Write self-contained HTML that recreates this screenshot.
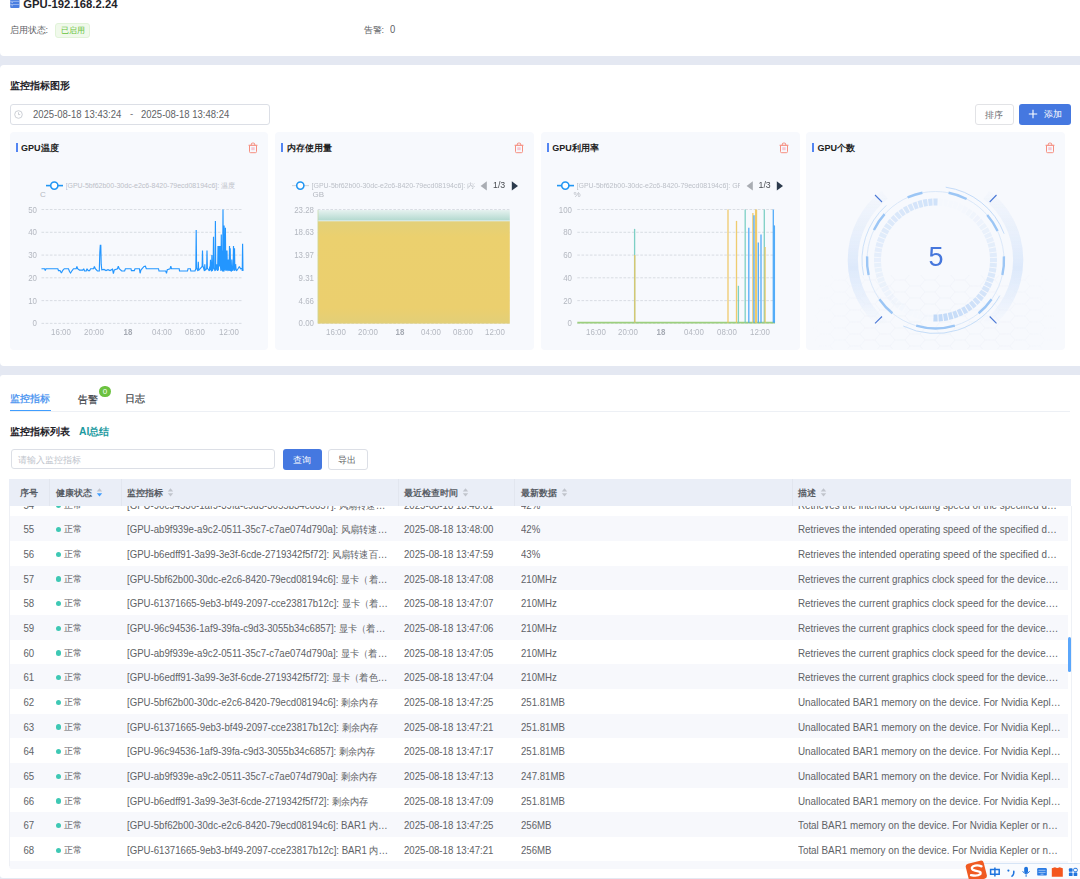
<!DOCTYPE html><html><head><meta charset="utf-8"><style>
*{box-sizing:border-box;margin:0;padding:0}
html,body{width:1080px;height:879px;overflow:hidden;background:#e4e8f2;font-family:"Liberation Sans", sans-serif;}
.a{position:absolute;white-space:nowrap}
.card{position:absolute;background:#fff;border-radius:4px}
.cc{position:absolute;background:#f7f9fd;border-radius:4px;top:132px;height:218px;width:258.8px}
.ct{position:absolute;top:141.8px;font-size:9px;font-weight:bold;color:#222;line-height:12px}
.bar{position:absolute;top:143px;width:2px;height:9px;background:#5385f2}
.ax{position:absolute;font-size:8px;color:#b4b8c0;line-height:10px;white-space:nowrap}
.leg{position:absolute;font-size:7px;color:#bcc0c8;line-height:9px;white-space:nowrap;overflow:hidden}
.row{position:absolute;left:9.3px;width:1059px;height:24.67px}
.td{position:absolute;font-size:9.7px;color:#606266;line-height:12px;white-space:nowrap}
.tx{font-size:10.5px;transform:scaleX(0.917);transform-origin:0 50%}
.th{position:absolute;font-size:8.8px;color:#565b63;line-height:12px;white-space:nowrap;font-weight:bold}
</style></head><body><div class="card" style="left:0;top:-20px;width:1090px;height:76px"></div>
<svg class="a" style="left:10px;top:0px" width="10" height="9" viewBox="0 0 10 9"><rect x="0.2" y="-3" width="9.3" height="10.9" rx="1" fill="#4a7ee0"/><rect x="0.2" y="0.9" width="9.3" height="0.7" fill="#b3c8f3"/><rect x="0.2" y="4.0" width="9.3" height="0.7" fill="#b3c8f3"/><rect x="1.6" y="2.1" width="1.1" height="0.9" fill="#c5d5f5"/><rect x="1.6" y="5.3" width="1.1" height="0.9" fill="#c5d5f5"/></svg>
<div class="a" style="left:23.3px;top:-2.6px;font-size:11.3px;font-weight:bold;color:#1f2329;line-height:14px">GPU-192.168.2.24</div>
<div class="a" style="left:9.6px;top:23.5px;font-size:9px;color:#606266;line-height:12px">启用状态:</div>
<div class="a" style="left:55px;top:23px;width:35px;height:15px;background:#f0f9eb;border:1px solid #e1f3d8;border-radius:3px"></div>
<div class="a" style="left:61.4px;top:25px;font-size:7.6px;color:#67c23a;line-height:12px">已启用</div>
<div class="a" style="left:363.5px;top:23.5px;font-size:9px;color:#606266;line-height:12px">告警:</div>
<div class="a" style="left:390px;top:23.3px;font-size:10.5px;color:#606266;line-height:12px;transform:scaleX(0.9);transform-origin:0 50%">0</div>
<div class="card" style="left:0;top:65px;width:1090px;height:301px"></div>
<div class="a" style="left:10px;top:79.3px;font-size:10px;font-weight:bold;color:#1f2329;line-height:13px">监控指标图形</div>
<div class="a" style="left:10px;top:104px;width:260px;height:20.5px;border:1px solid #dcdfe6;border-radius:3px;background:#fff"></div>
<svg class="a" style="left:13.5px;top:109.5px" width="9" height="9" viewBox="0 0 9 9"><circle cx="4.5" cy="4.5" r="3.8" fill="none" stroke="#c0c4cc" stroke-width="0.8"/><path d="M4.5 2.3V4.6H6.2" fill="none" stroke="#c0c4cc" stroke-width="0.8"/></svg>
<div class="a" style="left:33px;top:108.3px;font-size:10.5px;color:#606266;line-height:12px;transform:scaleX(0.905);transform-origin:0 50%">2025-08-18 13:43:24</div>
<div class="a" style="left:130px;top:108px;font-size:9.6px;color:#606266;line-height:12px">-</div>
<div class="a" style="left:140.8px;top:108.3px;font-size:10.5px;color:#606266;line-height:12px;transform:scaleX(0.905);transform-origin:0 50%">2025-08-18 13:48:24</div>
<div class="a" style="left:975px;top:104px;width:38.5px;height:20.5px;border:1px solid #e2e3e6;border-radius:3px;background:#fff"></div>
<div class="a" style="left:985px;top:108.5px;font-size:9px;color:#6b6e73;line-height:12px">排序</div>
<div class="a" style="left:1019px;top:104px;width:52px;height:20.5px;border-radius:3px;background:#4578e0"></div>
<svg class="a" style="left:1028px;top:109px" width="10" height="10" viewBox="0 0 10 10"><path d="M5 0.8V9.2M0.8 5H9.2" stroke="#fff" stroke-width="1.1"/></svg>
<div class="a" style="left:1043.5px;top:108px;font-size:9px;color:#fff;line-height:12px">添加</div>
<div class="cc" style="left:9.6px"></div>
<div class="bar" style="left:16px"></div>
<div class="ct" style="left:21.1px">GPU温度</div>
<svg class="a" style="left:248.2px;top:142px" width="10" height="12" viewBox="0 0 10 12"><path d="M0.6 3.3H9.4" stroke="#f5897a" stroke-width="1.1"/><path d="M3.3 3.2V2.2Q3.3 1.1 4.4 1.1H5.6Q6.7 1.1 6.7 2.2V3.2" fill="none" stroke="#f5897a" stroke-width="1"/><path d="M1.5 3.6V9.6Q1.5 10.7 2.6 10.7H7.4Q8.5 10.7 8.5 9.6V3.6" fill="none" stroke="#f68f80" stroke-width="1"/><path d="M4.1 5.2V8.2M5.9 5.2V8.2" stroke="#f59cb0" stroke-width="0.9"/></svg>
<div class="cc" style="left:275.2px"></div>
<div class="bar" style="left:281px"></div>
<div class="ct" style="left:286.7px">内存使用量</div>
<svg class="a" style="left:513.8px;top:142px" width="10" height="12" viewBox="0 0 10 12"><path d="M0.6 3.3H9.4" stroke="#f5897a" stroke-width="1.1"/><path d="M3.3 3.2V2.2Q3.3 1.1 4.4 1.1H5.6Q6.7 1.1 6.7 2.2V3.2" fill="none" stroke="#f5897a" stroke-width="1"/><path d="M1.5 3.6V9.6Q1.5 10.7 2.6 10.7H7.4Q8.5 10.7 8.5 9.6V3.6" fill="none" stroke="#f68f80" stroke-width="1"/><path d="M4.1 5.2V8.2M5.9 5.2V8.2" stroke="#f59cb0" stroke-width="0.9"/></svg>
<div class="cc" style="left:540.8px"></div>
<div class="bar" style="left:547px"></div>
<div class="ct" style="left:552.3px">GPU利用率</div>
<svg class="a" style="left:779.4px;top:142px" width="10" height="12" viewBox="0 0 10 12"><path d="M0.6 3.3H9.4" stroke="#f5897a" stroke-width="1.1"/><path d="M3.3 3.2V2.2Q3.3 1.1 4.4 1.1H5.6Q6.7 1.1 6.7 2.2V3.2" fill="none" stroke="#f5897a" stroke-width="1"/><path d="M1.5 3.6V9.6Q1.5 10.7 2.6 10.7H7.4Q8.5 10.7 8.5 9.6V3.6" fill="none" stroke="#f68f80" stroke-width="1"/><path d="M4.1 5.2V8.2M5.9 5.2V8.2" stroke="#f59cb0" stroke-width="0.9"/></svg>
<div class="cc" style="left:806.1px"></div>
<div class="bar" style="left:812px"></div>
<div class="ct" style="left:817.6px">GPU个数</div>
<svg class="a" style="left:1044.7px;top:142px" width="10" height="12" viewBox="0 0 10 12"><path d="M0.6 3.3H9.4" stroke="#f5897a" stroke-width="1.1"/><path d="M3.3 3.2V2.2Q3.3 1.1 4.4 1.1H5.6Q6.7 1.1 6.7 2.2V3.2" fill="none" stroke="#f5897a" stroke-width="1"/><path d="M1.5 3.6V9.6Q1.5 10.7 2.6 10.7H7.4Q8.5 10.7 8.5 9.6V3.6" fill="none" stroke="#f68f80" stroke-width="1"/><path d="M4.1 5.2V8.2M5.9 5.2V8.2" stroke="#f59cb0" stroke-width="0.9"/></svg>
<svg class="a" style="left:45.5px;top:180px" width="18" height="11" viewBox="0 0 18 11"><path d="M0 5.6H17" stroke="#2196f3" stroke-width="1.6"/><circle cx="8.3" cy="5.6" r="3.6" fill="#fff" stroke="#2196f3" stroke-width="1.6"/></svg><div class="leg" style="left:65.5px;top:180.5px;width:175px">[GPU-5bf62b00-30dc-e2c6-8420-79ecd08194c6]: 温度</div><div class="ax" style="left:40px;top:190px">C</div>
<div class="ax" style="left:-3px;top:318.4px;width:40px;text-align:right;font-size:8.6px;transform:scaleX(0.92);transform-origin:100% 50%">0</div><div class="ax" style="left:-3px;top:295.62px;width:40px;text-align:right;font-size:8.6px;transform:scaleX(0.92);transform-origin:100% 50%">10</div><div class="ax" style="left:-3px;top:272.84px;width:40px;text-align:right;font-size:8.6px;transform:scaleX(0.92);transform-origin:100% 50%">20</div><div class="ax" style="left:-3px;top:250.05999999999997px;width:40px;text-align:right;font-size:8.6px;transform:scaleX(0.92);transform-origin:100% 50%">30</div><div class="ax" style="left:-3px;top:227.27999999999997px;width:40px;text-align:right;font-size:8.6px;transform:scaleX(0.92);transform-origin:100% 50%">40</div><div class="ax" style="left:-3px;top:204.49999999999997px;width:40px;text-align:right;font-size:8.6px;transform:scaleX(0.92);transform-origin:100% 50%">50</div>
<svg class="a" style="left:0;top:0" width="1080" height="360"><path d="M41.5 323.4H243" stroke="#d5d9e0" stroke-width="0.9" stroke-dasharray="2.6 1.6"/><path d="M41.5 300.6H243" stroke="#d5d9e0" stroke-width="0.9" stroke-dasharray="2.6 1.6"/><path d="M41.5 277.8H243" stroke="#d5d9e0" stroke-width="0.9" stroke-dasharray="2.6 1.6"/><path d="M41.5 255.1H243" stroke="#d5d9e0" stroke-width="0.9" stroke-dasharray="2.6 1.6"/><path d="M41.5 232.3H243" stroke="#d5d9e0" stroke-width="0.9" stroke-dasharray="2.6 1.6"/><path d="M41.5 209.5H243" stroke="#d5d9e0" stroke-width="0.9" stroke-dasharray="2.6 1.6"/></svg>
<div class="ax" style="left:40.6px;top:326.5px;width:40px;text-align:center;font-weight:normal;color:#b4b8c0;font-size:8.6px;transform:scaleX(0.92)">16:00</div><div class="ax" style="left:73.6px;top:326.5px;width:40px;text-align:center;font-weight:normal;color:#b4b8c0;font-size:8.6px;transform:scaleX(0.92)">20:00</div><div class="ax" style="left:107.7px;top:326.5px;width:40px;text-align:center;font-weight:bold;color:#a6abb4;font-size:8.6px;transform:scaleX(0.92)">18</div><div class="ax" style="left:141.6px;top:326.5px;width:40px;text-align:center;font-weight:normal;color:#b4b8c0;font-size:8.6px;transform:scaleX(0.92)">04:00</div><div class="ax" style="left:175.1px;top:326.5px;width:40px;text-align:center;font-weight:normal;color:#b4b8c0;font-size:8.6px;transform:scaleX(0.92)">08:00</div><div class="ax" style="left:209.3px;top:326.5px;width:40px;text-align:center;font-weight:normal;color:#b4b8c0;font-size:8.6px;transform:scaleX(0.92)">12:00</div>
<svg class="a" style="left:0;top:0" width="1080" height="360"><path d="M41.50 268.73 L44.60 268.73 L45.30 270.55 L46.00 268.73 L57.80 268.73 L58.50 270.55 L60.00 270.55 L61.40 273.06 L62.80 270.32 L64.30 268.73 L68.50 268.73 L69.50 271.46 L70.60 273.06 L72.10 270.55 L73.50 268.73 L76.20 268.73 L76.90 266.45 L77.60 268.73 L79.50 270.09 L82.80 270.09 L83.70 268.73 L84.60 271.01 L86.20 271.01 L87.00 268.73 L88.20 270.55 L89.60 270.55 L90.60 268.73 L93.60 268.73 L94.40 266.45 L95.30 268.73 L97.40 271.01 L99.30 271.01 L99.80 252.78 L100.30 245.26 L100.80 245.26 L101.20 264.17 L101.80 269.87 L104.00 269.41 L106.00 270.55 L108.00 269.64 L110.00 270.55 L112.50 269.18 L113.40 273.74 L114.30 269.87 L117.50 268.73 L118.30 266.22 L119.20 268.73 L121.70 271.01 L124.60 271.01 L125.40 268.73 L131.00 268.73 L131.40 270.55 L134.30 270.55 L135.00 268.73 L139.40 268.73 L140.10 273.28 L140.90 270.09 L144.00 266.45 L145.40 266.22 L146.30 268.73 L158.50 268.73 L159.00 271.01 L165.70 271.01 L166.50 273.28 L167.30 269.64 L170.10 268.73 L170.80 266.22 L171.50 268.73 L179.20 268.73 L179.50 271.01 L187.50 271.01 L188.00 268.73 L190.40 268.73 L190.80 271.01 L195.00 271.01 L195.85 268.73 L196.20 230.00 L196.55 268.04 L197.95 271.01 L198.30 261.89 L198.65 270.32 L202.15 266.45 L202.50 250.50 L202.85 265.77 L204.45 271.01 L204.80 264.17 L205.15 270.32 L206.65 268.73 L207.00 250.50 L207.35 268.04 L209.35 271.01 L209.70 266.45 L210.05 270.32 L210.50 259.84 L210.80 268.73 L211.55 271.46 L211.90 255.06 L212.25 270.78 L213.15 268.73 L213.50 236.84 L213.85 268.04 L214.43 268.73 L215.05 271.01 L215.40 220.89 L215.75 270.32 L216.35 268.73 L216.70 264.17 L217.05 268.04 L217.65 271.01 L218.00 245.95 L218.35 270.32 L219.06 246.03 L219.65 266.45 L220.00 245.95 L220.35 265.77 L220.95 271.01 L221.30 234.56 L221.65 270.32 L221.75 268.73 L222.10 250.50 L222.45 268.04 L222.65 271.46 L223.00 209.50 L223.35 270.78 L223.75 271.01 L224.10 225.45 L224.45 270.32 L225.05 268.73 L225.40 227.72 L225.75 268.04 L226.05 271.01 L226.40 250.50 L226.65 268.73 L226.75 270.32 L227.00 250.50 L227.35 268.04 L228.05 271.01 L228.40 259.62 L228.75 270.32 L229.15 268.73 L229.50 245.95 L229.85 268.04 L229.85 271.01 L230.20 248.23 L230.55 270.32 L231.45 271.46 L231.80 259.62 L232.15 270.78 L233.15 268.73 L233.50 245.95 L233.85 268.04 L234.15 271.01 L234.50 248.23 L234.85 270.32 L235.25 268.73 L235.60 264.17 L235.95 268.04 L236.50 271.01 L238.00 268.73 L239.40 266.45 L240.50 268.73 L242.00 268.27 L242.25 271.01 L242.60 243.67 L242.95 270.32 L243.70 269.87" fill="none" stroke="#2396ff" stroke-width="1.15" stroke-linejoin="miter" stroke-miterlimit="2"/></svg>
<svg class="a" style="left:291.7px;top:180px" width="18" height="11" viewBox="0 0 18 11"><path d="M0 5.6H17" stroke="#d2d4d8" stroke-width="1.1"/><circle cx="8.3" cy="5.6" r="3.6" fill="#fff" stroke="#2196f3" stroke-width="1.6"/></svg><div class="leg" style="left:311.5px;top:180.5px;width:163px">[GPU-5bf62b00-30dc-e2c6-8420-79ecd08194c6]: 内存</div><svg class="a" style="left:480.0px;top:180.8px" width="8" height="10" viewBox="0 0 8 10"><path d="M6.8 0.2V9.6L0.6 4.9Z" fill="#a9adb3"/></svg><div class="a" style="left:493.0px;top:180px;font-size:8.8px;color:#4a4d52;line-height:11px">1/3</div><svg class="a" style="left:510.8px;top:180.8px" width="8" height="10" viewBox="0 0 8 10"><path d="M0.8 0.2V9.6L7 4.9Z" fill="#2b3a4c"/></svg><div class="ax" style="left:312.5px;top:190px">GB</div>
<div class="ax" style="left:273.5px;top:318.4px;width:40px;text-align:right;font-size:8.6px;transform:scaleX(0.92);transform-origin:100% 50%">0.00</div><div class="ax" style="left:273.5px;top:295.62px;width:40px;text-align:right;font-size:8.6px;transform:scaleX(0.92);transform-origin:100% 50%">4.66</div><div class="ax" style="left:273.5px;top:272.84px;width:40px;text-align:right;font-size:8.6px;transform:scaleX(0.92);transform-origin:100% 50%">9.31</div><div class="ax" style="left:273.5px;top:250.05999999999997px;width:40px;text-align:right;font-size:8.6px;transform:scaleX(0.92);transform-origin:100% 50%">13.97</div><div class="ax" style="left:273.5px;top:227.27999999999997px;width:40px;text-align:right;font-size:8.6px;transform:scaleX(0.92);transform-origin:100% 50%">18.63</div><div class="ax" style="left:273.5px;top:204.49999999999997px;width:40px;text-align:right;font-size:8.6px;transform:scaleX(0.92);transform-origin:100% 50%">23.28</div>
<div class="ax" style="left:315.5px;top:326.5px;width:40px;text-align:center;font-weight:normal;color:#b4b8c0;font-size:8.6px;transform:scaleX(0.92)">16:00</div><div class="ax" style="left:347.5px;top:326.5px;width:40px;text-align:center;font-weight:normal;color:#b4b8c0;font-size:8.6px;transform:scaleX(0.92)">20:00</div><div class="ax" style="left:379.7px;top:326.5px;width:40px;text-align:center;font-weight:bold;color:#a6abb4;font-size:8.6px;transform:scaleX(0.92)">18</div><div class="ax" style="left:411px;top:326.5px;width:40px;text-align:center;font-weight:normal;color:#b4b8c0;font-size:8.6px;transform:scaleX(0.92)">04:00</div><div class="ax" style="left:443px;top:326.5px;width:40px;text-align:center;font-weight:normal;color:#b4b8c0;font-size:8.6px;transform:scaleX(0.92)">08:00</div><div class="ax" style="left:475.2px;top:326.5px;width:40px;text-align:center;font-weight:normal;color:#b4b8c0;font-size:8.6px;transform:scaleX(0.92)">12:00</div>
<svg class="a" style="left:0;top:0" width="1080" height="360"><path d="M317.8 323.4H510" stroke="#d5d9e0" stroke-width="0.9" stroke-dasharray="2.6 1.6"/><path d="M317.8 300.6H510" stroke="#d5d9e0" stroke-width="0.9" stroke-dasharray="2.6 1.6"/><path d="M317.8 277.8H510" stroke="#d5d9e0" stroke-width="0.9" stroke-dasharray="2.6 1.6"/><path d="M317.8 255.1H510" stroke="#d5d9e0" stroke-width="0.9" stroke-dasharray="2.6 1.6"/><path d="M317.8 232.3H510" stroke="#d5d9e0" stroke-width="0.9" stroke-dasharray="2.6 1.6"/><path d="M317.8 209.5H510" stroke="#d5d9e0" stroke-width="0.9" stroke-dasharray="2.6 1.6"/></svg>
<svg class="a" style="left:0;top:0" width="1080" height="360"><defs><linearGradient id="tg" x1="0" y1="0" x2="0" y2="1"><stop offset="0" stop-color="#e6f2f0"/><stop offset="1" stop-color="#b3d9cf"/></linearGradient><linearGradient id="yg" x1="0" y1="0" x2="0" y2="1"><stop offset="0" stop-color="#e3d07a"/><stop offset="0.15" stop-color="#ebd06e"/><stop offset="0.85" stop-color="#ebcf6e"/><stop offset="1" stop-color="#e2cf78"/></linearGradient></defs><rect x="317.8" y="210" width="192" height="10.5" fill="url(#tg)"/><rect x="317.8" y="220.3" width="192" height="1.2" fill="#cfe9e4"/><rect x="317.8" y="221.3" width="192" height="102.3" fill="url(#yg)"/><rect x="317.5" y="210" width="1" height="113" fill="#c8d9a0" opacity="0.6"/></svg>
<svg class="a" style="left:556.5px;top:180px" width="18" height="11" viewBox="0 0 18 11"><path d="M0 5.6H17" stroke="#2196f3" stroke-width="1.6"/><circle cx="8.3" cy="5.6" r="3.6" fill="#fff" stroke="#2196f3" stroke-width="1.6"/></svg><div class="leg" style="left:576.5px;top:180.5px;width:163px">[GPU-5bf62b00-30dc-e2c6-8420-79ecd08194c6]: GPU利用率</div><svg class="a" style="left:745.5px;top:180.8px" width="8" height="10" viewBox="0 0 8 10"><path d="M6.8 0.2V9.6L0.6 4.9Z" fill="#a9adb3"/></svg><div class="a" style="left:758.5px;top:180px;font-size:8.8px;color:#4a4d52;line-height:11px">1/3</div><svg class="a" style="left:776.3px;top:180.8px" width="8" height="10" viewBox="0 0 8 10"><path d="M0.8 0.2V9.6L7 4.9Z" fill="#2b3a4c"/></svg><div class="ax" style="left:573.5px;top:190px">%</div>
<div class="ax" style="left:532px;top:318.4px;width:40px;text-align:right;font-size:8.6px;transform:scaleX(0.92);transform-origin:100% 50%">0</div><div class="ax" style="left:532px;top:295.62px;width:40px;text-align:right;font-size:8.6px;transform:scaleX(0.92);transform-origin:100% 50%">20</div><div class="ax" style="left:532px;top:272.84px;width:40px;text-align:right;font-size:8.6px;transform:scaleX(0.92);transform-origin:100% 50%">40</div><div class="ax" style="left:532px;top:250.05999999999997px;width:40px;text-align:right;font-size:8.6px;transform:scaleX(0.92);transform-origin:100% 50%">60</div><div class="ax" style="left:532px;top:227.27999999999997px;width:40px;text-align:right;font-size:8.6px;transform:scaleX(0.92);transform-origin:100% 50%">80</div><div class="ax" style="left:532px;top:204.49999999999997px;width:40px;text-align:right;font-size:8.6px;transform:scaleX(0.92);transform-origin:100% 50%">100</div>
<div class="ax" style="left:575.6px;top:326.5px;width:40px;text-align:center;font-weight:normal;color:#b4b8c0;font-size:8.6px;transform:scaleX(0.92)">16:00</div><div class="ax" style="left:608.4px;top:326.5px;width:40px;text-align:center;font-weight:normal;color:#b4b8c0;font-size:8.6px;transform:scaleX(0.92)">20:00</div><div class="ax" style="left:641.1px;top:326.5px;width:40px;text-align:center;font-weight:bold;color:#a6abb4;font-size:8.6px;transform:scaleX(0.92)">18</div><div class="ax" style="left:674.2px;top:326.5px;width:40px;text-align:center;font-weight:normal;color:#b4b8c0;font-size:8.6px;transform:scaleX(0.92)">04:00</div><div class="ax" style="left:706.9px;top:326.5px;width:40px;text-align:center;font-weight:normal;color:#b4b8c0;font-size:8.6px;transform:scaleX(0.92)">08:00</div><div class="ax" style="left:740.2px;top:326.5px;width:40px;text-align:center;font-weight:normal;color:#b4b8c0;font-size:8.6px;transform:scaleX(0.92)">12:00</div>
<svg class="a" style="left:0;top:0" width="1080" height="360"><path d="M577.3 323.4H775" stroke="#d5d9e0" stroke-width="0.9" stroke-dasharray="2.6 1.6"/><path d="M577.3 300.6H775" stroke="#d5d9e0" stroke-width="0.9" stroke-dasharray="2.6 1.6"/><path d="M577.3 277.8H775" stroke="#d5d9e0" stroke-width="0.9" stroke-dasharray="2.6 1.6"/><path d="M577.3 255.1H775" stroke="#d5d9e0" stroke-width="0.9" stroke-dasharray="2.6 1.6"/><path d="M577.3 232.3H775" stroke="#d5d9e0" stroke-width="0.9" stroke-dasharray="2.6 1.6"/><path d="M577.3 209.5H775" stroke="#d5d9e0" stroke-width="0.9" stroke-dasharray="2.6 1.6"/></svg>
<svg class="a" style="left:0;top:0" width="1080" height="360"><path d="M577.3 322.6H775" stroke="#9ccf7e" stroke-width="1.6"/><path d="M634.6 322.8V228.9" stroke="#6cc9bd" stroke-width="1.3" stroke-opacity="0.88"/><path d="M634.8 322.8V255.1" stroke="#eec55a" stroke-width="1.3" stroke-opacity="0.88"/><path d="M728 322.8V209.5" stroke="#eec55a" stroke-width="1.3" stroke-opacity="0.88"/><path d="M736.5 322.8V220.9" stroke="#eec55a" stroke-width="1.3" stroke-opacity="0.88"/><path d="M738.4 322.8V285.8" stroke="#6cc9bd" stroke-width="1.3" stroke-opacity="0.88"/><path d="M745.2 322.8V209.5" stroke="#6cc9bd" stroke-width="1.3" stroke-opacity="0.88"/><path d="M748.8 322.8V227.7" stroke="#3ba1f8" stroke-width="1.3" stroke-opacity="0.88"/><path d="M752.9 322.8V212.9" stroke="#eec55a" stroke-width="1.3" stroke-opacity="0.88"/><path d="M754 322.8V215.2" stroke="#3ba1f8" stroke-width="1.3" stroke-opacity="0.88"/><path d="M755.6 322.8V209.5" stroke="#eec55a" stroke-width="1.3" stroke-opacity="0.88"/><path d="M756.5 322.8V209.5" stroke="#eec55a" stroke-width="1.3" stroke-opacity="0.88"/><path d="M758.3 322.8V242.5" stroke="#3ba1f8" stroke-width="1.3" stroke-opacity="0.88"/><path d="M761 322.8V234.6" stroke="#3ba1f8" stroke-width="1.3" stroke-opacity="0.88"/><path d="M764.3 322.8V209.5" stroke="#6cc9bd" stroke-width="1.3" stroke-opacity="0.88"/><path d="M765.1 322.8V247.1" stroke="#eec55a" stroke-width="1.3" stroke-opacity="0.88"/><path d="M773.3 322.8V209.5" stroke="#3ba1f8" stroke-width="1.3" stroke-opacity="0.88"/><path d="M774.4 322.8V225.4" stroke="#3ba1f8" stroke-width="1.3" stroke-opacity="0.88"/></svg>
<svg class="a" style="left:806px;top:132px" width="258.5" height="217" viewBox="806 132 258.5 217"><defs><radialGradient id="og" cx="0.5" cy="0.5" r="0.5"><stop offset="0.8" stop-color="#dfeafb" stop-opacity="0"/><stop offset="1" stop-color="#dfeafb"/></radialGradient><pattern id="hex" width="30" height="12" patternUnits="userSpaceOnUse" x="920" y="280"><path d="M0 6L5 0H15L20 6L15 12H5Z M20 6H30" fill="none" stroke="#e6ebf5" stroke-width="0.6"/></pattern><linearGradient id="hf" x1="0" y1="0" x2="0" y2="1"><stop offset="0" stop-color="#fff" stop-opacity="0"/><stop offset="1" stop-color="#fff" stop-opacity="1"/></linearGradient><radialGradient id="hr" gradientUnits="userSpaceOnUse" cx="935" cy="325" r="125"><stop offset="0" stop-color="#fff"/><stop offset="0.6" stop-color="#fff" stop-opacity="0.7"/><stop offset="1" stop-color="#fff" stop-opacity="0"/></radialGradient><mask id="hm"><rect x="806" y="275" width="260" height="75" fill="url(#hr)"/></mask></defs><rect x="806" y="275" width="258.5" height="74" fill="url(#hex)" mask="url(#hm)" opacity="0.6"/><linearGradient id="af" gradientUnits="userSpaceOnUse" x1="0" y1="180" x2="0" y2="340"><stop offset="0.05" stop-color="#dce8fa" stop-opacity="0"/><stop offset="0.27" stop-color="#e3ecfa" stop-opacity="0.6"/><stop offset="0.55" stop-color="#dde9fb" stop-opacity="1"/><stop offset="0.78" stop-color="#dde9fb" stop-opacity="0.4"/><stop offset="0.9" stop-color="#dde9fb" stop-opacity="0"/></linearGradient><path d="M884.58 194.83A82.7 82.7 0 0 0 884.58 325.17" fill="none" stroke="url(#af)" stroke-width="10.2"/><path d="M986.42 325.17A82.7 82.7 0 0 0 986.42 194.83" fill="none" stroke="url(#af)" stroke-width="10.2"/><circle cx="935.5" cy="260" r="68.5" fill="none" stroke="#d3e3f8" stroke-width="0.8"/><path d="M1004.12 233.66A73.5 73.5 0 0 0 945.73 187.22" fill="none" stroke="#b6d3f6" stroke-width="0.8"/><path d="M886.32 205.38A73.5 73.5 0 0 0 863.61 275.28" fill="none" stroke="#c2daf7" stroke-width="0.8"/><path d="M903.28 326.06A73.5 73.5 0 0 0 999.78 295.63" fill="none" stroke="#b9d5f6" stroke-width="0.8"/><path d="M922.43 192.76A68.5 68.5 0 0 0 907.64 197.42" fill="none" stroke="#9cc6f5" stroke-width="2.4"/><path d="M966.60 198.97A68.5 68.5 0 0 0 948.57 192.76" fill="none" stroke="#9cc6f5" stroke-width="2.4"/><path d="M884.59 214.16A68.5 68.5 0 0 0 873.93 229.97" fill="none" stroke="#9cc6f5" stroke-width="2.4"/><path d="M997.58 231.05A68.5 68.5 0 0 0 987.20 215.06" fill="none" stroke="#9cc6f5" stroke-width="2.4"/><path d="M1002.35 274.94A68.5 68.5 0 0 0 1003.91 256.41" fill="none" stroke="#9cc6f5" stroke-width="2.4"/><path d="M867.09 256.41A68.5 68.5 0 0 0 868.65 274.94" fill="none" stroke="#9cc6f5" stroke-width="2.4"/><path d="M879.39 299.29A68.5 68.5 0 0 0 892.39 313.23" fill="none" stroke="#9cc6f5" stroke-width="2.4"/><path d="M978.61 313.23A68.5 68.5 0 0 0 991.61 299.29" fill="none" stroke="#9cc6f5" stroke-width="2.4"/><path d="M916.16 325.71A68.5 68.5 0 0 0 954.84 325.71" fill="none" stroke="#9cc6f5" stroke-width="2.4"/><path d="M933.48 202.04A58 58 0 0 1 937.52 202.04" fill="none" stroke="#c6dcf8" stroke-opacity="0.80" stroke-width="7"/><path d="M928.43 202.43A58 58 0 0 1 932.46 202.08" fill="none" stroke="#c6dcf8" stroke-opacity="0.77" stroke-width="7"/><path d="M923.44 203.27A58 58 0 0 1 927.43 202.56" fill="none" stroke="#c6dcf8" stroke-opacity="0.75" stroke-width="7"/><path d="M918.54 204.53A58 58 0 0 1 922.45 203.49" fill="none" stroke="#c6dcf8" stroke-opacity="0.72" stroke-width="7"/><path d="M913.77 206.22A58 58 0 0 1 917.58 204.84" fill="none" stroke="#c6dcf8" stroke-opacity="0.70" stroke-width="7"/><path d="M909.17 208.32A58 58 0 0 1 912.84 206.61" fill="none" stroke="#c6dcf8" stroke-opacity="0.67" stroke-width="7"/><path d="M904.76 210.81A58 58 0 0 1 908.27 208.79" fill="none" stroke="#c6dcf8" stroke-opacity="0.65" stroke-width="7"/><path d="M900.59 213.68A58 58 0 0 1 903.91 211.36" fill="none" stroke="#c6dcf8" stroke-opacity="0.62" stroke-width="7"/><path d="M896.69 216.90A58 58 0 0 1 899.79 214.30" fill="none" stroke="#c6dcf8" stroke-opacity="0.60" stroke-width="7"/><path d="M893.08 220.44A58 58 0 0 1 895.94 217.58" fill="none" stroke="#c6dcf8" stroke-opacity="0.57" stroke-width="7"/><path d="M889.80 224.29A58 58 0 0 1 892.40 221.19" fill="none" stroke="#c6dcf8" stroke-opacity="0.55" stroke-width="7"/><path d="M886.86 228.41A58 58 0 0 1 889.18 225.09" fill="none" stroke="#c6dcf8" stroke-opacity="0.52" stroke-width="7"/><path d="M884.29 232.77A58 58 0 0 1 886.31 229.26" fill="none" stroke="#c6dcf8" stroke-opacity="0.50" stroke-width="7"/><path d="M882.11 237.34A58 58 0 0 1 883.82 233.67" fill="none" stroke="#c6dcf8" stroke-opacity="0.47" stroke-width="7"/><path d="M880.34 242.08A58 58 0 0 1 881.72 238.27" fill="none" stroke="#c6dcf8" stroke-opacity="0.45" stroke-width="7"/><path d="M878.99 246.95A58 58 0 0 1 880.03 243.04" fill="none" stroke="#c6dcf8" stroke-opacity="0.42" stroke-width="7"/><path d="M878.06 251.93A58 58 0 0 1 878.77 247.94" fill="none" stroke="#c6dcf8" stroke-opacity="0.39" stroke-width="7"/><path d="M877.58 256.96A58 58 0 0 1 877.93 252.93" fill="none" stroke="#c6dcf8" stroke-opacity="0.37" stroke-width="7"/><path d="M877.54 262.02A58 58 0 0 1 877.54 257.98" fill="none" stroke="#c6dcf8" stroke-opacity="0.34" stroke-width="7"/><path d="M877.93 267.07A58 58 0 0 1 877.58 263.04" fill="none" stroke="#c6dcf8" stroke-opacity="0.32" stroke-width="7"/><path d="M878.77 272.06A58 58 0 0 1 878.06 268.07" fill="none" stroke="#c6dcf8" stroke-opacity="0.29" stroke-width="7"/><path d="M880.03 276.96A58 58 0 0 1 878.99 273.05" fill="none" stroke="#c6dcf8" stroke-opacity="0.27" stroke-width="7"/><path d="M881.72 281.73A58 58 0 0 1 880.34 277.92" fill="none" stroke="#c6dcf8" stroke-opacity="0.24" stroke-width="7"/><path d="M883.82 286.33A58 58 0 0 1 882.11 282.66" fill="none" stroke="#c6dcf8" stroke-opacity="0.22" stroke-width="7"/><path d="M886.31 290.74A58 58 0 0 1 884.29 287.23" fill="none" stroke="#c6dcf8" stroke-opacity="0.19" stroke-width="7"/><path d="M889.18 294.91A58 58 0 0 1 886.86 291.59" fill="none" stroke="#c6dcf8" stroke-opacity="0.17" stroke-width="7"/><path d="M892.40 298.81A58 58 0 0 1 889.80 295.71" fill="none" stroke="#c6dcf8" stroke-opacity="0.14" stroke-width="7"/><path d="M895.94 302.42A58 58 0 0 1 893.08 299.56" fill="none" stroke="#c6dcf8" stroke-opacity="0.12" stroke-width="7"/><path d="M899.79 305.70A58 58 0 0 1 896.69 303.10" fill="none" stroke="#c6dcf8" stroke-opacity="0.09" stroke-width="7"/><path d="M903.91 308.64A58 58 0 0 1 900.59 306.32" fill="none" stroke="#c6dcf8" stroke-opacity="0.07" stroke-width="7"/><path d="M908.27 311.21A58 58 0 0 1 904.76 309.19" fill="none" stroke="#c6dcf8" stroke-opacity="0.04" stroke-width="7"/><path d="M912.84 313.39A58 58 0 0 1 909.17 311.68" fill="none" stroke="#c6dcf8" stroke-opacity="0.04" stroke-width="7"/><path d="M917.58 315.16A58 58 0 0 1 913.77 313.78" fill="none" stroke="#c6dcf8" stroke-opacity="0.04" stroke-width="7"/><path d="M922.45 316.51A58 58 0 0 1 918.54 315.47" fill="none" stroke="#c6dcf8" stroke-opacity="0.04" stroke-width="7"/><path d="M927.43 317.44A58 58 0 0 1 923.44 316.73" fill="none" stroke="#c6dcf8" stroke-opacity="0.04" stroke-width="7"/><path d="M932.46 317.92A58 58 0 0 1 928.43 317.57" fill="none" stroke="#c6dcf8" stroke-opacity="0.04" stroke-width="7"/><path d="M937.52 317.96A58 58 0 0 1 933.48 317.96" fill="none" stroke="#c6dcf8" stroke-opacity="0.04" stroke-width="7"/><path d="M937.52 317.96A58 58 0 0 1 933.48 317.96" fill="none" stroke="#bed7f7" stroke-opacity="0.95" stroke-width="7"/><path d="M942.57 317.57A58 58 0 0 1 938.54 317.92" fill="none" stroke="#bed7f7" stroke-opacity="0.92" stroke-width="7"/><path d="M947.56 316.73A58 58 0 0 1 943.57 317.44" fill="none" stroke="#bed7f7" stroke-opacity="0.89" stroke-width="7"/><path d="M952.46 315.47A58 58 0 0 1 948.55 316.51" fill="none" stroke="#bed7f7" stroke-opacity="0.86" stroke-width="7"/><path d="M957.23 313.78A58 58 0 0 1 953.42 315.16" fill="none" stroke="#bed7f7" stroke-opacity="0.83" stroke-width="7"/><path d="M961.83 311.68A58 58 0 0 1 958.16 313.39" fill="none" stroke="#bed7f7" stroke-opacity="0.80" stroke-width="7"/><path d="M966.24 309.19A58 58 0 0 1 962.73 311.21" fill="none" stroke="#bed7f7" stroke-opacity="0.77" stroke-width="7"/><path d="M970.41 306.32A58 58 0 0 1 967.09 308.64" fill="none" stroke="#bed7f7" stroke-opacity="0.74" stroke-width="7"/><path d="M974.31 303.10A58 58 0 0 1 971.21 305.70" fill="none" stroke="#bed7f7" stroke-opacity="0.71" stroke-width="7"/><path d="M977.92 299.56A58 58 0 0 1 975.06 302.42" fill="none" stroke="#bed7f7" stroke-opacity="0.68" stroke-width="7"/><path d="M981.20 295.71A58 58 0 0 1 978.60 298.81" fill="none" stroke="#bed7f7" stroke-opacity="0.65" stroke-width="7"/><path d="M984.14 291.59A58 58 0 0 1 981.82 294.91" fill="none" stroke="#bed7f7" stroke-opacity="0.62" stroke-width="7"/><path d="M986.71 287.23A58 58 0 0 1 984.69 290.74" fill="none" stroke="#bed7f7" stroke-opacity="0.59" stroke-width="7"/><path d="M988.89 282.66A58 58 0 0 1 987.18 286.33" fill="none" stroke="#bed7f7" stroke-opacity="0.56" stroke-width="7"/><path d="M990.66 277.92A58 58 0 0 1 989.28 281.73" fill="none" stroke="#bed7f7" stroke-opacity="0.53" stroke-width="7"/><path d="M992.01 273.05A58 58 0 0 1 990.97 276.96" fill="none" stroke="#bed7f7" stroke-opacity="0.50" stroke-width="7"/><path d="M992.94 268.07A58 58 0 0 1 992.23 272.06" fill="none" stroke="#bed7f7" stroke-opacity="0.47" stroke-width="7"/><path d="M993.42 263.04A58 58 0 0 1 993.07 267.07" fill="none" stroke="#bed7f7" stroke-opacity="0.44" stroke-width="7"/><path d="M993.46 257.98A58 58 0 0 1 993.46 262.02" fill="none" stroke="#bed7f7" stroke-opacity="0.41" stroke-width="7"/><path d="M993.07 252.93A58 58 0 0 1 993.42 256.96" fill="none" stroke="#bed7f7" stroke-opacity="0.38" stroke-width="7"/><path d="M992.23 247.94A58 58 0 0 1 992.94 251.93" fill="none" stroke="#bed7f7" stroke-opacity="0.35" stroke-width="7"/><path d="M990.97 243.04A58 58 0 0 1 992.01 246.95" fill="none" stroke="#bed7f7" stroke-opacity="0.32" stroke-width="7"/><path d="M989.28 238.27A58 58 0 0 1 990.66 242.08" fill="none" stroke="#bed7f7" stroke-opacity="0.29" stroke-width="7"/><path d="M987.18 233.67A58 58 0 0 1 988.89 237.34" fill="none" stroke="#bed7f7" stroke-opacity="0.26" stroke-width="7"/><path d="M984.69 229.26A58 58 0 0 1 986.71 232.77" fill="none" stroke="#bed7f7" stroke-opacity="0.23" stroke-width="7"/><path d="M981.82 225.09A58 58 0 0 1 984.14 228.41" fill="none" stroke="#bed7f7" stroke-opacity="0.20" stroke-width="7"/><path d="M978.60 221.19A58 58 0 0 1 981.20 224.29" fill="none" stroke="#bed7f7" stroke-opacity="0.17" stroke-width="7"/><path d="M975.06 217.58A58 58 0 0 1 977.92 220.44" fill="none" stroke="#bed7f7" stroke-opacity="0.14" stroke-width="7"/><path d="M971.21 214.30A58 58 0 0 1 974.31 216.90" fill="none" stroke="#bed7f7" stroke-opacity="0.11" stroke-width="7"/><path d="M967.09 211.36A58 58 0 0 1 970.41 213.68" fill="none" stroke="#bed7f7" stroke-opacity="0.08" stroke-width="7"/><path d="M962.73 208.79A58 58 0 0 1 966.24 210.81" fill="none" stroke="#bed7f7" stroke-opacity="0.05" stroke-width="7"/><path d="M958.16 206.61A58 58 0 0 1 961.83 208.32" fill="none" stroke="#bed7f7" stroke-opacity="0.03" stroke-width="7"/><path d="M953.42 204.84A58 58 0 0 1 957.23 206.22" fill="none" stroke="#bed7f7" stroke-opacity="0.03" stroke-width="7"/><path d="M948.55 203.49A58 58 0 0 1 952.46 204.53" fill="none" stroke="#bed7f7" stroke-opacity="0.03" stroke-width="7"/><path d="M943.57 202.56A58 58 0 0 1 947.56 203.27" fill="none" stroke="#bed7f7" stroke-opacity="0.03" stroke-width="7"/><path d="M938.54 202.08A58 58 0 0 1 942.57 202.43" fill="none" stroke="#bed7f7" stroke-opacity="0.03" stroke-width="7"/><path d="M875 195L882 202" stroke="#4a78d6" stroke-width="1.1"/><path d="M996.5 195L989.7 202" stroke="#4a78d6" stroke-width="1.1"/><path d="M875 323.3L882 316.5" stroke="#4a78d6" stroke-width="1.1"/><path d="M996.5 323.3L989.7 316.5" stroke="#4a78d6" stroke-width="1.1"/></svg>
<div class="a" style="left:921px;top:242px;width:30px;text-align:center;font-size:27px;color:#4677dc;line-height:30px">5</div>
<div class="card" style="left:0;top:375px;width:1090px;height:502.8px;border-radius:3px"></div>
<div class="a" style="left:10px;top:392px;font-size:9.9px;font-weight:500;-webkit-text-stroke:0.25px #3f8ff0;color:#3f8ff0;line-height:13px">监控指标</div>
<div class="a" style="left:10px;top:409.5px;width:41px;height:1.6px;background:#409eff"></div>
<div class="a" style="left:10px;top:410.8px;width:1060px;height:1px;background:#edf0f5"></div>
<div class="a" style="left:77.5px;top:393px;font-size:9.9px;font-weight:500;-webkit-text-stroke:0.2px #3a3e46;color:#3a3e46;line-height:13px">告警</div>
<div class="a" style="left:98.8px;top:385.9px;width:12.4px;height:11.2px;border-radius:6px;background:#6cc240"></div>
<div class="a" style="left:98.8px;top:386.5px;width:12.4px;text-align:center;font-size:8px;color:#fff;line-height:10px">0</div>
<div class="a" style="left:125px;top:392px;font-size:9.9px;font-weight:500;-webkit-text-stroke:0.2px #3a3e46;color:#3a3e46;line-height:13px">日志</div>
<div class="a" style="left:10px;top:424.8px;font-size:10.3px;font-weight:bold;color:#1f2329;line-height:13px">监控指标列表</div>
<div class="a" style="left:79px;top:424.8px;font-size:10.3px;font-weight:bold;color:#1b9aa0;line-height:13px">AI总结</div>
<div class="a" style="left:11.3px;top:449.3px;width:263.5px;height:20px;border:1px solid #dcdfe6;border-radius:3px;background:#fff"></div>
<div class="a" style="left:18.3px;top:453.5px;font-size:9px;color:#c0c4cc;line-height:12px">请输入监控指标</div>
<div class="a" style="left:283px;top:449.3px;width:38.7px;height:20.3px;border-radius:3px;background:#4578e0"></div>
<div class="a" style="left:293px;top:453.5px;font-size:9px;color:#fff;line-height:12px">查询</div>
<div class="a" style="left:328px;top:449.3px;width:39.6px;height:20.3px;border:1px solid #dcdfe6;border-radius:3px;background:#fff"></div>
<div class="a" style="left:338px;top:453.5px;font-size:9px;color:#606266;line-height:12px">导出</div>
<div class="a" style="left:0;top:506px;width:1080px;height:369px;overflow:hidden"><div class="a" style="left:9.3px;top:-14.47px;width:1059px;height:24.67px;background:#fff"></div><div class="td tx" style="left:9.3px;top:-7.43px;width:39.7px;text-align:center;transform-origin:50% 50%">54</div><div class="a" style="left:55.7px;top:-3.73px;width:5.3px;height:5.3px;border-radius:50%;background:#3ec8b4"></div><div class="td" style="left:64px;top:-7.43px;font-size:9px">正常</div><div class="td tx" style="left:127.4px;top:-7.43px;width:287.9px;overflow:hidden;text-overflow:ellipsis">[GPU-96c94536-1af9-39fa-c9d3-3055b34c6857]: <span style="font-size:9.9px">风扇转速百分比</span></div><div class="td tx" style="left:404.4px;top:-7.43px">2025-08-18 13:48:01</div><div class="td tx" style="left:521px;top:-7.43px">42%</div><div class="td tx" style="left:798px;top:-7.43px;width:280.7px;overflow:hidden;text-overflow:ellipsis;transform:scaleX(0.937)">Retrieves the intended operating speed of the specified device as a percentage of maximum</div><div class="a" style="left:9.3px;top:10.20px;width:1059px;height:24.67px;background:#f7f8fc"></div><div class="td tx" style="left:9.3px;top:17.24px;width:39.7px;text-align:center;transform-origin:50% 50%">55</div><div class="a" style="left:55.7px;top:20.94px;width:5.3px;height:5.3px;border-radius:50%;background:#3ec8b4"></div><div class="td" style="left:64px;top:17.24px;font-size:9px">正常</div><div class="td tx" style="left:127.4px;top:17.24px;width:287.9px;overflow:hidden;text-overflow:ellipsis">[GPU-ab9f939e-a9c2-0511-35c7-c7ae074d790a]: <span style="font-size:9.9px">风扇转速百分比</span></div><div class="td tx" style="left:404.4px;top:17.24px">2025-08-18 13:48:00</div><div class="td tx" style="left:521px;top:17.24px">42%</div><div class="td tx" style="left:798px;top:17.24px;width:280.7px;overflow:hidden;text-overflow:ellipsis;transform:scaleX(0.937)">Retrieves the intended operating speed of the specified device as a percentage of maximum</div><div class="a" style="left:9.3px;top:34.87px;width:1059px;height:24.67px;background:#fff"></div><div class="td tx" style="left:9.3px;top:41.91px;width:39.7px;text-align:center;transform-origin:50% 50%">56</div><div class="a" style="left:55.7px;top:45.61px;width:5.3px;height:5.3px;border-radius:50%;background:#3ec8b4"></div><div class="td" style="left:64px;top:41.91px;font-size:9px">正常</div><div class="td tx" style="left:127.4px;top:41.91px;width:287.9px;overflow:hidden;text-overflow:ellipsis">[GPU-b6edff91-3a99-3e3f-6cde-2719342f5f72]: <span style="font-size:9.9px">风扇转速百分比</span></div><div class="td tx" style="left:404.4px;top:41.91px">2025-08-18 13:47:59</div><div class="td tx" style="left:521px;top:41.91px">43%</div><div class="td tx" style="left:798px;top:41.91px;width:280.7px;overflow:hidden;text-overflow:ellipsis;transform:scaleX(0.937)">Retrieves the intended operating speed of the specified device as a percentage of maximum</div><div class="a" style="left:9.3px;top:59.54px;width:1059px;height:24.67px;background:#f7f8fc"></div><div class="td tx" style="left:9.3px;top:66.58px;width:39.7px;text-align:center;transform-origin:50% 50%">57</div><div class="a" style="left:55.7px;top:70.28px;width:5.3px;height:5.3px;border-radius:50%;background:#3ec8b4"></div><div class="td" style="left:64px;top:66.58px;font-size:9px">正常</div><div class="td tx" style="left:127.4px;top:66.58px;width:287.9px;overflow:hidden;text-overflow:ellipsis">[GPU-5bf62b00-30dc-e2c6-8420-79ecd08194c6]: <span style="font-size:9.9px">显卡（着色器）时钟频率</span></div><div class="td tx" style="left:404.4px;top:66.58px">2025-08-18 13:47:08</div><div class="td tx" style="left:521px;top:66.58px">210MHz</div><div class="td tx" style="left:798px;top:66.58px;width:280.7px;overflow:hidden;text-overflow:ellipsis;transform:scaleX(0.937)">Retrieves the current graphics clock speed for the device. For GPUs with multiple clocks</div><div class="a" style="left:9.3px;top:84.21px;width:1059px;height:24.67px;background:#fff"></div><div class="td tx" style="left:9.3px;top:91.25px;width:39.7px;text-align:center;transform-origin:50% 50%">58</div><div class="a" style="left:55.7px;top:94.95px;width:5.3px;height:5.3px;border-radius:50%;background:#3ec8b4"></div><div class="td" style="left:64px;top:91.25px;font-size:9px">正常</div><div class="td tx" style="left:127.4px;top:91.25px;width:287.9px;overflow:hidden;text-overflow:ellipsis">[GPU-61371665-9eb3-bf49-2097-cce23817b12c]: <span style="font-size:9.9px">显卡（着色器）时钟频率</span></div><div class="td tx" style="left:404.4px;top:91.25px">2025-08-18 13:47:07</div><div class="td tx" style="left:521px;top:91.25px">210MHz</div><div class="td tx" style="left:798px;top:91.25px;width:280.7px;overflow:hidden;text-overflow:ellipsis;transform:scaleX(0.937)">Retrieves the current graphics clock speed for the device. For GPUs with multiple clocks</div><div class="a" style="left:9.3px;top:108.88px;width:1059px;height:24.67px;background:#f7f8fc"></div><div class="td tx" style="left:9.3px;top:115.92px;width:39.7px;text-align:center;transform-origin:50% 50%">59</div><div class="a" style="left:55.7px;top:119.62px;width:5.3px;height:5.3px;border-radius:50%;background:#3ec8b4"></div><div class="td" style="left:64px;top:115.92px;font-size:9px">正常</div><div class="td tx" style="left:127.4px;top:115.92px;width:287.9px;overflow:hidden;text-overflow:ellipsis">[GPU-96c94536-1af9-39fa-c9d3-3055b34c6857]: <span style="font-size:9.9px">显卡（着色器）时钟频率</span></div><div class="td tx" style="left:404.4px;top:115.92px">2025-08-18 13:47:06</div><div class="td tx" style="left:521px;top:115.92px">210MHz</div><div class="td tx" style="left:798px;top:115.92px;width:280.7px;overflow:hidden;text-overflow:ellipsis;transform:scaleX(0.937)">Retrieves the current graphics clock speed for the device. For GPUs with multiple clocks</div><div class="a" style="left:9.3px;top:133.55px;width:1059px;height:24.67px;background:#fff"></div><div class="td tx" style="left:9.3px;top:140.59px;width:39.7px;text-align:center;transform-origin:50% 50%">60</div><div class="a" style="left:55.7px;top:144.29px;width:5.3px;height:5.3px;border-radius:50%;background:#3ec8b4"></div><div class="td" style="left:64px;top:140.59px;font-size:9px">正常</div><div class="td tx" style="left:127.4px;top:140.59px;width:287.9px;overflow:hidden;text-overflow:ellipsis">[GPU-ab9f939e-a9c2-0511-35c7-c7ae074d790a]: <span style="font-size:9.9px">显卡（着色器）时钟频率</span></div><div class="td tx" style="left:404.4px;top:140.59px">2025-08-18 13:47:05</div><div class="td tx" style="left:521px;top:140.59px">210MHz</div><div class="td tx" style="left:798px;top:140.59px;width:280.7px;overflow:hidden;text-overflow:ellipsis;transform:scaleX(0.937)">Retrieves the current graphics clock speed for the device. For GPUs with multiple clocks</div><div class="a" style="left:9.3px;top:158.22px;width:1059px;height:24.67px;background:#f7f8fc"></div><div class="td tx" style="left:9.3px;top:165.26px;width:39.7px;text-align:center;transform-origin:50% 50%">61</div><div class="a" style="left:55.7px;top:168.96px;width:5.3px;height:5.3px;border-radius:50%;background:#3ec8b4"></div><div class="td" style="left:64px;top:165.26px;font-size:9px">正常</div><div class="td tx" style="left:127.4px;top:165.26px;width:287.9px;overflow:hidden;text-overflow:ellipsis">[GPU-b6edff91-3a99-3e3f-6cde-2719342f5f72]: <span style="font-size:9.9px">显卡（着色器）时钟频率</span></div><div class="td tx" style="left:404.4px;top:165.26px">2025-08-18 13:47:04</div><div class="td tx" style="left:521px;top:165.26px">210MHz</div><div class="td tx" style="left:798px;top:165.26px;width:280.7px;overflow:hidden;text-overflow:ellipsis;transform:scaleX(0.937)">Retrieves the current graphics clock speed for the device. For GPUs with multiple clocks</div><div class="a" style="left:9.3px;top:182.89px;width:1059px;height:24.67px;background:#fff"></div><div class="td tx" style="left:9.3px;top:189.93px;width:39.7px;text-align:center;transform-origin:50% 50%">62</div><div class="a" style="left:55.7px;top:193.63px;width:5.3px;height:5.3px;border-radius:50%;background:#3ec8b4"></div><div class="td" style="left:64px;top:189.93px;font-size:9px">正常</div><div class="td tx" style="left:127.4px;top:189.93px;width:287.9px;overflow:hidden;text-overflow:ellipsis">[GPU-5bf62b00-30dc-e2c6-8420-79ecd08194c6]: <span style="font-size:9.9px">剩余内存</span></div><div class="td tx" style="left:404.4px;top:189.93px">2025-08-18 13:47:25</div><div class="td tx" style="left:521px;top:189.93px">251.81MB</div><div class="td tx" style="left:798px;top:189.93px;width:280.7px;overflow:hidden;text-overflow:ellipsis;transform:scaleX(0.937)">Unallocated BAR1 memory on the device. For Nvidia Kepler or newer GPUs only</div><div class="a" style="left:9.3px;top:207.56px;width:1059px;height:24.67px;background:#f7f8fc"></div><div class="td tx" style="left:9.3px;top:214.60px;width:39.7px;text-align:center;transform-origin:50% 50%">63</div><div class="a" style="left:55.7px;top:218.30px;width:5.3px;height:5.3px;border-radius:50%;background:#3ec8b4"></div><div class="td" style="left:64px;top:214.60px;font-size:9px">正常</div><div class="td tx" style="left:127.4px;top:214.60px;width:287.9px;overflow:hidden;text-overflow:ellipsis">[GPU-61371665-9eb3-bf49-2097-cce23817b12c]: <span style="font-size:9.9px">剩余内存</span></div><div class="td tx" style="left:404.4px;top:214.60px">2025-08-18 13:47:21</div><div class="td tx" style="left:521px;top:214.60px">251.81MB</div><div class="td tx" style="left:798px;top:214.60px;width:280.7px;overflow:hidden;text-overflow:ellipsis;transform:scaleX(0.937)">Unallocated BAR1 memory on the device. For Nvidia Kepler or newer GPUs only</div><div class="a" style="left:9.3px;top:232.23px;width:1059px;height:24.67px;background:#fff"></div><div class="td tx" style="left:9.3px;top:239.27px;width:39.7px;text-align:center;transform-origin:50% 50%">64</div><div class="a" style="left:55.7px;top:242.97px;width:5.3px;height:5.3px;border-radius:50%;background:#3ec8b4"></div><div class="td" style="left:64px;top:239.27px;font-size:9px">正常</div><div class="td tx" style="left:127.4px;top:239.27px;width:287.9px;overflow:hidden;text-overflow:ellipsis">[GPU-96c94536-1af9-39fa-c9d3-3055b34c6857]: <span style="font-size:9.9px">剩余内存</span></div><div class="td tx" style="left:404.4px;top:239.27px">2025-08-18 13:47:17</div><div class="td tx" style="left:521px;top:239.27px">251.81MB</div><div class="td tx" style="left:798px;top:239.27px;width:280.7px;overflow:hidden;text-overflow:ellipsis;transform:scaleX(0.937)">Unallocated BAR1 memory on the device. For Nvidia Kepler or newer GPUs only</div><div class="a" style="left:9.3px;top:256.90px;width:1059px;height:24.67px;background:#f7f8fc"></div><div class="td tx" style="left:9.3px;top:263.94px;width:39.7px;text-align:center;transform-origin:50% 50%">65</div><div class="a" style="left:55.7px;top:267.64px;width:5.3px;height:5.3px;border-radius:50%;background:#3ec8b4"></div><div class="td" style="left:64px;top:263.94px;font-size:9px">正常</div><div class="td tx" style="left:127.4px;top:263.94px;width:287.9px;overflow:hidden;text-overflow:ellipsis">[GPU-ab9f939e-a9c2-0511-35c7-c7ae074d790a]: <span style="font-size:9.9px">剩余内存</span></div><div class="td tx" style="left:404.4px;top:263.94px">2025-08-18 13:47:13</div><div class="td tx" style="left:521px;top:263.94px">247.81MB</div><div class="td tx" style="left:798px;top:263.94px;width:280.7px;overflow:hidden;text-overflow:ellipsis;transform:scaleX(0.937)">Unallocated BAR1 memory on the device. For Nvidia Kepler or newer GPUs only</div><div class="a" style="left:9.3px;top:281.57px;width:1059px;height:24.67px;background:#fff"></div><div class="td tx" style="left:9.3px;top:288.61px;width:39.7px;text-align:center;transform-origin:50% 50%">66</div><div class="a" style="left:55.7px;top:292.31px;width:5.3px;height:5.3px;border-radius:50%;background:#3ec8b4"></div><div class="td" style="left:64px;top:288.61px;font-size:9px">正常</div><div class="td tx" style="left:127.4px;top:288.61px;width:287.9px;overflow:hidden;text-overflow:ellipsis">[GPU-b6edff91-3a99-3e3f-6cde-2719342f5f72]: <span style="font-size:9.9px">剩余内存</span></div><div class="td tx" style="left:404.4px;top:288.61px">2025-08-18 13:47:09</div><div class="td tx" style="left:521px;top:288.61px">251.81MB</div><div class="td tx" style="left:798px;top:288.61px;width:280.7px;overflow:hidden;text-overflow:ellipsis;transform:scaleX(0.937)">Unallocated BAR1 memory on the device. For Nvidia Kepler or newer GPUs only</div><div class="a" style="left:9.3px;top:306.24px;width:1059px;height:24.67px;background:#f7f8fc"></div><div class="td tx" style="left:9.3px;top:313.27px;width:39.7px;text-align:center;transform-origin:50% 50%">67</div><div class="a" style="left:55.7px;top:316.97px;width:5.3px;height:5.3px;border-radius:50%;background:#3ec8b4"></div><div class="td" style="left:64px;top:313.27px;font-size:9px">正常</div><div class="td tx" style="left:127.4px;top:313.27px;width:287.9px;overflow:hidden;text-overflow:ellipsis">[GPU-5bf62b00-30dc-e2c6-8420-79ecd08194c6]: BAR1<span style="font-size:9.9px"> 内存总量</span></div><div class="td tx" style="left:404.4px;top:313.27px">2025-08-18 13:47:25</div><div class="td tx" style="left:521px;top:313.27px">256MB</div><div class="td tx" style="left:798px;top:313.27px;width:280.7px;overflow:hidden;text-overflow:ellipsis;transform:scaleX(0.937)">Total BAR1 memory on the device. For Nvidia Kepler or newer GPUs only</div><div class="a" style="left:9.3px;top:330.91px;width:1059px;height:24.67px;background:#fff"></div><div class="td tx" style="left:9.3px;top:337.95px;width:39.7px;text-align:center;transform-origin:50% 50%">68</div><div class="a" style="left:55.7px;top:341.65px;width:5.3px;height:5.3px;border-radius:50%;background:#3ec8b4"></div><div class="td" style="left:64px;top:337.95px;font-size:9px">正常</div><div class="td tx" style="left:127.4px;top:337.95px;width:287.9px;overflow:hidden;text-overflow:ellipsis">[GPU-61371665-9eb3-bf49-2097-cce23817b12c]: BAR1<span style="font-size:9.9px"> 内存总量</span></div><div class="td tx" style="left:404.4px;top:337.95px">2025-08-18 13:47:21</div><div class="td tx" style="left:521px;top:337.95px">256MB</div><div class="td tx" style="left:798px;top:337.95px;width:280.7px;overflow:hidden;text-overflow:ellipsis;transform:scaleX(0.937)">Total BAR1 memory on the device. For Nvidia Kepler or newer GPUs only</div><div class="a" style="left:9.3px;top:355.4px;width:1059px;height:7.2px;background:#f7f8fc;border-radius:0 0 3px 3px"></div><div class="a" style="left:9.3px;top:0;width:0.9px;height:360px;background:#eef0f5"></div></div>
<div class="a" style="left:9.3px;top:479px;width:1061.7px;height:26.8px;background:#eaeef7"></div>
<div class="a" style="left:49px;top:479px;width:1px;height:26.8px;background:#e2e6ef"></div>
<div class="a" style="left:120.7px;top:479px;width:1px;height:26.8px;background:#e2e6ef"></div>
<div class="a" style="left:397.8px;top:479px;width:1px;height:26.8px;background:#e2e6ef"></div>
<div class="a" style="left:514.4px;top:479px;width:1px;height:26.8px;background:#e2e6ef"></div>
<div class="a" style="left:791.7px;top:479px;width:1px;height:26.8px;background:#e2e6ef"></div>
<div class="th" style="left:9.3px;top:486.5px;width:39.7px;text-align:center">序号</div>
<div class="th" style="left:55.5px;top:486.5px">健康状态</div>
<svg class="a" style="left:95.5px;top:487.0px" width="7" height="11" viewBox="0 0 7 11"><path d="M0.8 4.5L3.5 1.2L6.2 4.5Z" fill="#c0c4cc"/><path d="M0.8 6.3L3.5 9.6L6.2 6.3Z" fill="#409eff"/></svg>
<div class="th" style="left:127.4px;top:486.5px">监控指标</div>
<svg class="a" style="left:166.5px;top:487.0px" width="7" height="11" viewBox="0 0 7 11"><path d="M0.8 4.5L3.5 1.2L6.2 4.5Z" fill="#c0c4cc"/><path d="M0.8 6.3L3.5 9.6L6.2 6.3Z" fill="#c0c4cc"/></svg>
<div class="th" style="left:404.4px;top:486.5px">最近检查时间</div>
<svg class="a" style="left:461.5px;top:487.0px" width="7" height="11" viewBox="0 0 7 11"><path d="M0.8 4.5L3.5 1.2L6.2 4.5Z" fill="#c0c4cc"/><path d="M0.8 6.3L3.5 9.6L6.2 6.3Z" fill="#c0c4cc"/></svg>
<div class="th" style="left:521px;top:486.5px">最新数据</div>
<svg class="a" style="left:560.5px;top:487.0px" width="7" height="11" viewBox="0 0 7 11"><path d="M0.8 4.5L3.5 1.2L6.2 4.5Z" fill="#c0c4cc"/><path d="M0.8 6.3L3.5 9.6L6.2 6.3Z" fill="#c0c4cc"/></svg>
<div class="th" style="left:798px;top:486.5px">描述</div>
<svg class="a" style="left:819.5px;top:487.0px" width="7" height="11" viewBox="0 0 7 11"><path d="M0.8 4.5L3.5 1.2L6.2 4.5Z" fill="#c0c4cc"/><path d="M0.8 6.3L3.5 9.6L6.2 6.3Z" fill="#c0c4cc"/></svg>
<div class="a" style="left:1068.3px;top:637px;width:2.7px;height:35.3px;border-radius:1.5px;background:#5aa6fb"></div>
<div class="a" style="left:1070.5px;top:506px;width:0.8px;height:356px;background:#eef1f6"></div>
<svg class="a" style="left:960px;top:855px" width="120" height="24" viewBox="960 855 120 24"><rect x="984" y="863.3" width="96" height="16" fill="#f9fbfe"/><path d="M984 863.5H1080" stroke="#d3e2f5" stroke-width="0.9"/><g transform="rotate(-14 976 871)"><rect x="967" y="862" width="18.5" height="18.5" rx="3" fill="#f05a22"/></g><path d="M981.5 866.3Q977 864.6 973.3 866.3Q970.6 868 972.8 869.8Q974.8 871 978.2 871.3Q981.6 871.8 980.3 874.2Q977.5 876.6 971 875.2" fill="none" stroke="#fff" stroke-width="2.3" stroke-linecap="round"/><path d="M990.6 869.5H999.2V874.2H990.6Z M994.9 867.6V876.4" fill="none" stroke="#1f74de" stroke-width="1.5"/><circle cx="1008.4" cy="870.6" r="1.1" fill="#1f74de"/><path d="M1013.8 871.2Q1014.2 874.6 1012 876.2" stroke="#1f74de" stroke-width="1.5" fill="none" stroke-linecap="round"/><rect x="1024.2" y="866.7" width="3.8" height="6.6" rx="1.9" fill="#1f74de"/><path d="M1022.6 871.2Q1026.1 876.3 1029.6 871.2M1026.1 874.4V876.8" stroke="#1f74de" stroke-width="1" fill="none"/><rect x="1037.2" y="868" width="9.6" height="7.6" rx="1.2" fill="#2a7be4"/><path d="M1038.5 870.3H1045.5M1038.5 872.4H1045.5M1040.5 874.2H1043.5" stroke="#cfe1f8" stroke-width="0.7"/><path d="M1051.8 868.2L1055 867.2Q1057.2 868.6 1059.5 867.2L1062.8 868.2V876.7H1051.8Z" fill="#f4561e"/><rect x="1068.9" y="868.3" width="3.7" height="3.5" rx="0.9" fill="#1f74de"/><rect x="1073.6" y="868.3" width="3.7" height="3.5" rx="1.2" fill="none" stroke="#1f74de" stroke-width="1"/><rect x="1068.9" y="872.6" width="3.7" height="3.5" rx="0.9" fill="#1f74de"/><rect x="1073.6" y="872.6" width="3.7" height="3.5" rx="0.9" fill="#1f74de"/></svg></body></html>
